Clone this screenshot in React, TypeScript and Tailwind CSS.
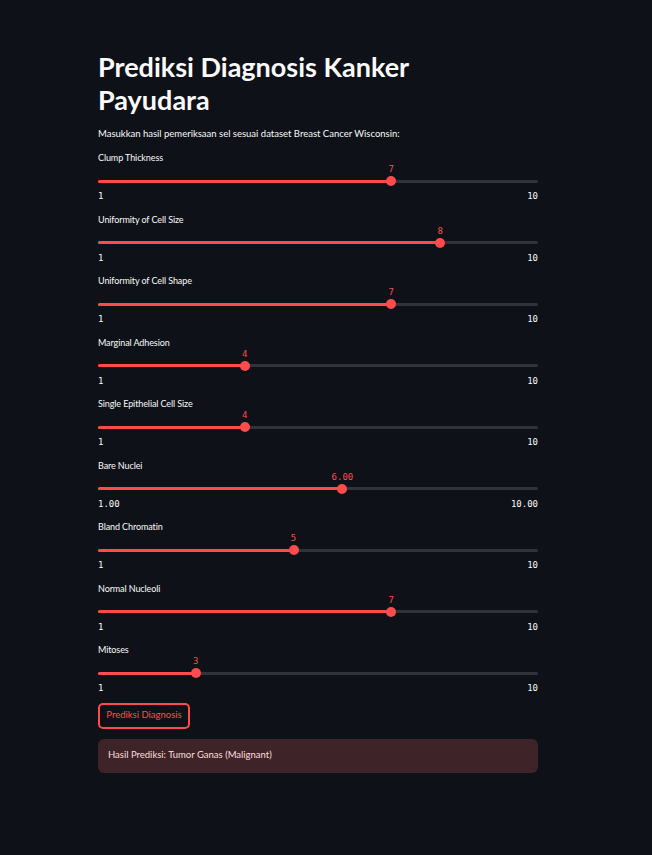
import React from 'react';

type Field = {
  label: string;
  value: number;
  min: number;
  max: number;
  decimals?: boolean;
};

const fields: Field[] = [
  { label: 'Clump Thickness', value: 7, min: 1, max: 10 },
  { label: 'Uniformity of Cell Size', value: 8, min: 1, max: 10 },
  { label: 'Uniformity of Cell Shape', value: 7, min: 1, max: 10 },
  { label: 'Marginal Adhesion', value: 4, min: 1, max: 10 },
  { label: 'Single Epithelial Cell Size', value: 4, min: 1, max: 10 },
  { label: 'Bare Nuclei', value: 6, min: 1, max: 10, decimals: true },
  { label: 'Bland Chromatin', value: 5, min: 1, max: 10 },
  { label: 'Normal Nucleoli', value: 7, min: 1, max: 10 },
  { label: 'Mitoses', value: 3, min: 1, max: 10 },
];

const sans = "font-['Lato','Noto_Sans',sans-serif]";
const mono = "font-['DejaVu_Sans_Mono','Liberation_Mono',monospace]";

function fmt(n: number, decimals?: boolean) {
  return decimals ? n.toFixed(2) : String(n);
}

function Slider({ field }: { field: Field }) {
  const pct = ((field.value - field.min) / (field.max - field.min)) * 100;

  return (
    <div className="flex h-[61.5px] flex-col">
      <div className={`${sans} text-[9px] leading-[14px] tracking-[-0.1px] text-[#fafafa]`}>{field.label}</div>
      <div className="relative mt-[12px] h-[8px]">
        <div className="absolute left-0 right-0 top-[2.5px] h-[3px] rounded-full bg-[#31333b]" />
        <div
          className="absolute left-0 top-[2.5px] h-[3px] rounded-full bg-[#ff4b4b]"
          style={{ width: `${pct}%` }}
        />
        <div
          className="absolute top-[-1px] h-[10px] w-[10px] -translate-x-1/2 rounded-full bg-[#ff4b4b]"
          style={{ left: `${pct}%` }}
        />
        <div
          className={`${mono} absolute top-[-14px] -translate-x-1/2 text-[9px] leading-[12px] text-[#ff4b4b]`}
          style={{ left: `${pct}%` }}
        >
          {fmt(field.value, field.decimals)}
        </div>
      </div>
      <div className={`${mono} mt-[5px] flex justify-between text-[9px] leading-[12px] text-[#fafafa]`}>
        <span>{fmt(field.min, field.decimals)}</span>
        <span>{fmt(field.max, field.decimals)}</span>
      </div>
    </div>
  );
}

export default function App() {
  return (
    <div className="min-h-[855px] w-full bg-[#0e1117]">
      <div className="ml-[98px] flex w-[440px] flex-col pt-[50px]">
        <h1 className={`${sans} max-w-[400px] text-[27px] font-bold leading-[33px] text-[#fafafa]`}>
          Prediksi Diagnosis Kanker Payudara
        </h1>
        <p className={`${sans} mt-[10px] text-[9.5px] leading-[16px] text-[#fafafa]`}>
          Masukkan hasil pemeriksaan sel sesuai dataset Breast Cancer Wisconsin:
        </p>
        <div className="mt-[9px] flex flex-col">
          {fields.map((f) => (
            <Slider key={f.label} field={f} />
          ))}
        </div>
        <div className="flex flex-col items-start gap-[10px]">
          <button
            className={`${sans} mt-[-2px] h-[26px] w-[92px] rounded-[5px] border-2 border-[#ff4b4b] bg-[#0e1117] text-[9.5px] text-[#ff4b4b]`}
          >
            Prediksi Diagnosis
          </button>
          <div className={`${sans} flex h-[34px] w-full items-center rounded-[6px] bg-[#3e2428] px-[10px] text-[9.5px] text-[#ffdede]`}>
            Hasil Prediksi: Tumor Ganas (Malignant)
          </div>
        </div>
      </div>
    </div>
  );
}
